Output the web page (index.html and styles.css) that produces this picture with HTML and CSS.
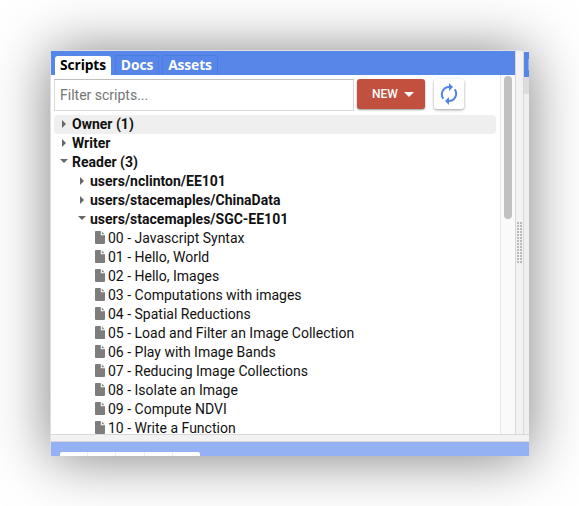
FILE: index.html
```html
<!DOCTYPE html>
<html lang="en">
<head>
<meta charset="utf-8">
<title>Scripts</title>
<link rel="stylesheet" href="styles.css">
</head>
<body>
<svg class="defs" width="0" height="0">
  <symbol id="file" viewBox="0 0 10 13"><path fill="#7d7d7d" d="M1 0h4.8v4.2H10V12a1 1 0 0 1-1 1H1a1 1 0 0 1-1-1V1a1 1 0 0 1 1-1z"/><path fill="#8c8c8c" d="M6.8 0.4 9.7 3.3H6.8z"/></symbol>
</svg>
<main class="window">
  <div class="upper">
    <section class="panel">
      <nav class="tabs">
        <a class="tab active">Scripts</a>
        <a class="tab docs">Docs</a>
        <a class="tab assets">Assets</a>
      </nav>
      <div class="body">
        <div class="content">
          <div class="toolbar">
            <input class="filter" type="text" placeholder="Filter scripts...">
            <button class="new">NEW<i class="caret"></i></button>
            <button class="refresh" aria-label="Refresh">
              <svg width="18" height="22" viewBox="0 0 18 22"><g fill="none" stroke="#5184ea" stroke-width="2"><path d="M3.3 15.7A7.3 7.3 0 0 1 9.7 4.1"/><path d="M14.7 6.3A7.3 7.3 0 0 1 8.3 17.9"/></g><path fill="#5184ea" d="M9 0l4 4.1-4 4zM9 22l-4-4.1 4-4z"/></svg>
            </button>
          </div>
          <ul class="tree">
            <li class="row group selected"><i class="arrow"></i>Owner (1)</li>
            <li class="row group"><i class="arrow"></i>Writer</li>
            <li class="row group"><i class="arrow open"></i>Reader (3)</li>
            <li class="row group repo"><i class="arrow"></i>users/nclinton/EE101</li>
            <li class="row group repo"><i class="arrow"></i>users/stacemaples/ChinaData</li>
            <li class="row group repo"><i class="arrow open"></i>users/stacemaples/SGC-EE101</li>
            <li class="row file"><svg><use href="#file"/></svg>00 - Javascript Syntax</li>
            <li class="row file"><svg><use href="#file"/></svg>01 - Hello, World</li>
            <li class="row file"><svg><use href="#file"/></svg>02 - Hello, Images</li>
            <li class="row file"><svg><use href="#file"/></svg>03 - Computations with images</li>
            <li class="row file"><svg><use href="#file"/></svg>04 - Spatial Reductions</li>
            <li class="row file"><svg><use href="#file"/></svg>05 - Load and Filter an Image Collection</li>
            <li class="row file"><svg><use href="#file"/></svg>06 - Play with Image Bands</li>
            <li class="row file"><svg><use href="#file"/></svg>07 - Reducing Image Collections</li>
            <li class="row file"><svg><use href="#file"/></svg>08 - Isolate an Image</li>
            <li class="row file"><svg><use href="#file"/></svg>09 - Compute NDVI</li>
            <li class="row file"><svg><use href="#file"/></svg>10 - Write a Function</li>
          </ul>
        </div>
        <div class="track"><div class="thumb"></div></div>
      </div>
    </section>
    <div class="divider"><div class="grip"></div></div>
    <section class="editor"><div class="editor-head"><i></i></div><div class="editor-bar"></div></section>
  </div>
  <div class="hdivider"></div>
  <div class="map"><div class="tools"><i></i><i></i><i></i><i></i><i></i></div></div>
</main>
</body>
</html>
```

FILE: styles.css
```css
* { box-sizing: border-box; }
html, body { margin: 0; height: 100%; overflow: hidden; background: #fff; }
body { padding: 50px; font-family: Roboto, "Liberation Sans", sans-serif; color: #111; }
.defs { position: absolute; }
.window {
  width: 479px; height: 406px; display: flex; flex-direction: column;
  border: solid #dcdfe6; border-width: 1px 0 0 1px; background: #fff;
  box-shadow: 0 2px 54px rgba(0, 0, 0, .5); overflow: hidden;
}
.upper { display: flex; height: 384px; }
.panel { width: 464px; display: flex; flex-direction: column; }
.tabs {
  height: 24px; flex: none; background: #5686e8; display: flex; align-items: flex-end; padding-left: 4px;
  font: bold 13.8px/18px "Open Sans", sans-serif; letter-spacing: -.1px; color: #fff;
}
.tab { height: 20px; border: 1px solid #4b7ce2; border-bottom: 0; border-radius: 3px 3px 0 0; display: flex; justify-content: center; white-space: nowrap; }
.active { width: 56px; height: 19px; background: #fff; border-color: #fff; color: #000; line-height: 16px; }
.docs { width: 44px; margin-left: 4px; }
.assets { width: 56px; margin-left: 3px; }
.body { display: flex; flex: 1; min-height: 0; }
.content { width: 449px; overflow: hidden; }
.toolbar { display: flex; padding: 4px 0 0 3px; height: 40px; align-items: flex-start; }
.filter {
  width: 300px; height: 32px; margin: 0; padding: 0 5px; border: 1px solid #d9d9d9; border-top-color: #c0c0c0;
  font: 14px Roboto, sans-serif; background: #fff; border-radius: 0;
}
.filter::placeholder { color: #757575; opacity: 1; }
.new {
  width: 68px; height: 30px; margin-left: 3px; padding: 0 0 0 4px; border: 0; border-radius: 3px;
  background: #c1503e; color: #fff; font: 500 12px Roboto, sans-serif;
  display: flex; align-items: center; justify-content: center; gap: 6px; box-shadow: 0 1px 2px rgba(0, 0, 0, .4);
}
.caret { border: 5px solid transparent; border-top-color: #fff; border-bottom: 0; }
.refresh {
  width: 30px; height: 30px; margin-left: 9px; padding: 0; border: 0; border-radius: 3px; background: #fff;
  display: flex; align-items: center; justify-content: center; box-shadow: 0 1px 3px rgba(0, 0, 0, .38);
}
.tree { list-style: none; margin: 0; padding: 0 4px 0 3px; }
.row { height: 19px; display: flex; align-items: center; font-size: 14px; line-height: 19px; white-space: nowrap; }
.group { font-weight: bold; padding-left: 8px; }
.selected { background: #efefef; border-radius: 4px; }
.repo { padding-left: 26px; }
.arrow { width: 10px; height: 9px; display: flex; align-items: flex-start; }
.arrow::before { content: ""; border: 4px solid transparent; border-left: 4.5px solid #666; border-right: 0; }
.arrow.open { margin-left: -2px; width: 12px; height: 7px; }
.arrow.open::before { border: 4px solid transparent; border-top: 4px solid #666; border-bottom: 0; }
.file { padding-left: 41px; }
.file svg { width: 10px; height: 13px; margin: -3px 3px 0 0; }
.track { width: 15px; background: #fafafa; border-left: 1px solid #e7e7e7; padding: 1px 0 0 3px; }
.thumb { width: 8px; height: 143px; border-radius: 4px; background: #c1c1c1; }
.divider {
  width: 9px; background: #f2f2f2; border: solid #d8d8d8; border-width: 0 1px;
  display: flex; align-items: center; justify-content: center;
}
.grip {
  width: 6px; height: 42px; margin-bottom: 2px; background: repeating-linear-gradient(#f2f2f2 0 1px, transparent 1px 3px),
  repeating-linear-gradient(90deg, #b9b9b9 0 2px, #f2f2f2 2px 3px);
}
.editor { width: 5px; background: #efefef; padding-top: 1px; }
.editor-head { height: 25px; background: #5686e8; display: flex; justify-content: flex-end; align-items: center; }
.editor-head i { width: 1px; height: 11px; background: #8eafef; }
.editor-bar { height: 17px; background: #dcdcdc; }
.hdivider { height: 8px; background: #f2f2f2; border: solid #d8d8d8; border-width: 1px 0; margin-top: -1px; }
.map { flex: 1; background: #94b2f3; padding: 10px 0 0 9px; }
.tools { display: flex; width: 140px; height: 4px; background: #fff; border-radius: 2px 2px 0 0; }
.tools i { flex: 1; border-right: 1px solid #eee; }
.tools i:last-child { border: 0; }
```
